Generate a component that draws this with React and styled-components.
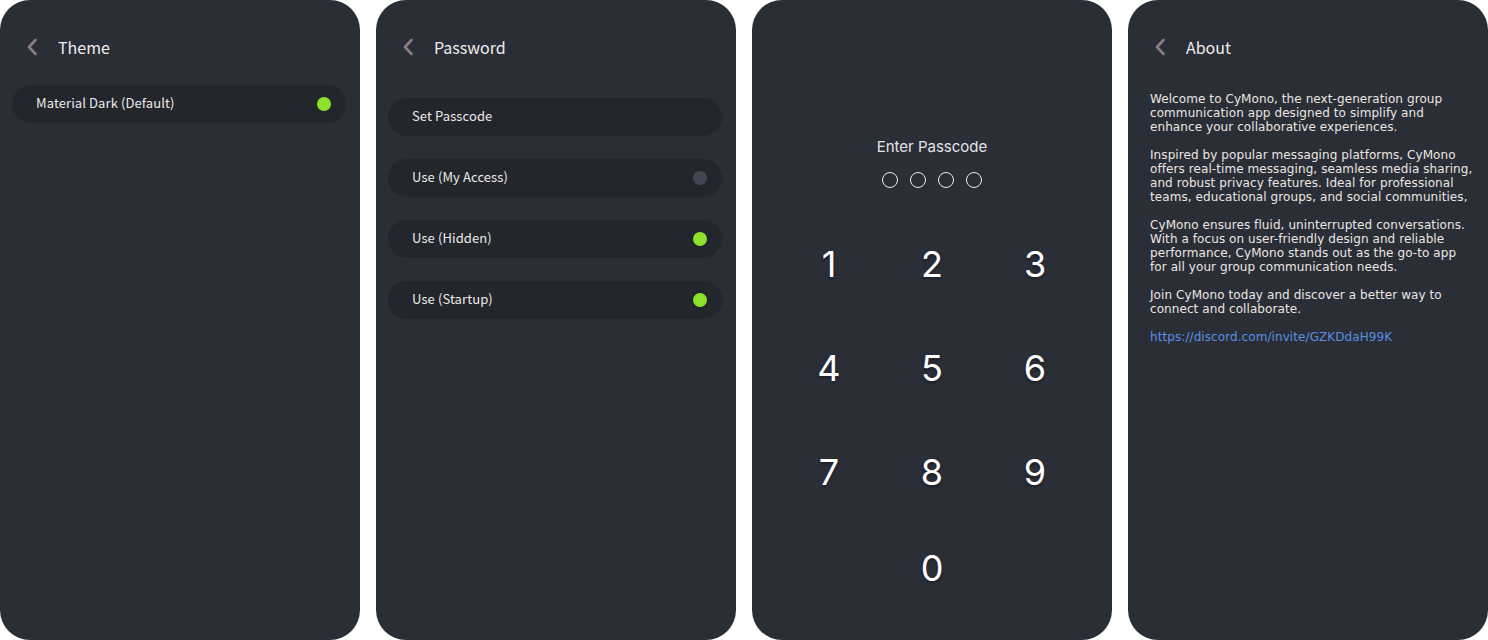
import React from "react";
import styled, { createGlobalStyle } from "styled-components";

const GlobalStyle = createGlobalStyle`
  html, body { margin: 0; padding: 0; background: #fff; }
  body { font-family: "Noto Sans CJK KR", "Noto Sans", sans-serif; }
`;

const Screens = styled.div`
  display: flex;
  gap: 16px;
  width: 1488px;
  height: 640px;
`;

const Panel = styled.div`
  width: 360px;
  height: 640px;
  flex: none;
  background: #2a2e37;
  border-radius: 30px;
  box-sizing: border-box;
  overflow: hidden;
  display: flex;
  flex-direction: column;
`;

const Header = styled.div`
  height: 96px;
  display: flex;
  align-items: flex-start;
  padding: 37px 0 0 26px;
  box-sizing: border-box;
`;

const BackBtn = styled.button`
  width: 14px;
  height: 20px;
  padding: 0;
  border: 0;
  background: transparent;
  display: flex;
  align-items: center;
  cursor: pointer;
  margin-right: 18px;
`;

const Title = styled.div`
  font-size: 16px;
  color: #f1ecea;
  line-height: 20px;
`;

const List = styled.div`
  display: flex;
  flex-direction: column;
  gap: ${(p) => p.$gap}px;
  margin-top: ${(p) => p.$top}px;
  padding: 0 14px 0 12px;
`;

const Row = styled.div`
  height: 38px;
  border-radius: 19px;
  background: #23262d;
  display: flex;
  align-items: center;
  justify-content: space-between;
  padding: 0 15px 3px 24px;
  box-sizing: border-box;
  font-size: 13px;
  letter-spacing: 0.1px;
  color: #eeeae8;
`;

const Dot = styled.span`
  width: 14px;
  height: 14px;
  border-radius: 50%;
  margin-top: 3px;
  background: ${(p) => (p.$on ? "#8ee22c" : "#434753")};
`;

const PassWrap = styled.div`
  display: flex;
  flex-direction: column;
  align-items: center;
  padding-top: 137px;
  font-family: Inter, "Noto Sans", sans-serif;
`;

const PassTitle = styled.div`
  font-size: 15px;
  color: #e4e4e6;
  line-height: 20px;
`;

const Circles = styled.div`
  display: flex;
  gap: 12px;
  margin-top: 15px;
`;

const Circle = styled.span`
  width: 16px;
  height: 16px;
  border: 1.2px solid #eceef0;
  border-radius: 50%;
  box-sizing: border-box;
`;

const Keypad = styled.div`
  display: grid;
  grid-template-columns: repeat(3, 103px);
  grid-auto-rows: 104px;
  margin-top: 54px;
  width: 309px;
`;

const Key = styled.button`
  border: 0;
  background: transparent;
  color: #fff;
  font-family: Inter, "Noto Sans", sans-serif;
  font-size: 36px;
  font-weight: 400;
  line-height: 44px;
  height: 44px;
  padding: 0;
  cursor: pointer;
  text-shadow: 0 2px 3px rgba(0, 0, 0, 0.35);
  grid-column: ${(p) => p.$col || "auto"};
  ${(p) => p.$last && "margin-top: -8px;"}
`;

const About = styled.div`
  margin-top: -4px;
  padding: 0 10px 0 22px;
  font-family: "DejaVu Sans", sans-serif;
  font-size: 12px;
  letter-spacing: 0.08px;
  line-height: 14px;
  color: #ece6e2;
  white-space: nowrap;
`;

const Para = styled.p`
  margin: 0 0 14px;
`;

const Link = styled.a`
  color: #5a8fe0;
  text-decoration: none;
  display: block;
  margin: 0;
`;

const paragraphs = [
  [
    "Welcome to CyMono, the next-generation group",
    "communication app designed to simplify and",
    "enhance your collaborative experiences.",
  ],
  [
    "Inspired by popular messaging platforms, CyMono",
    "offers real-time messaging, seamless media sharing,",
    "and robust privacy features. Ideal for professional",
    "teams, educational groups, and social communities,",
  ],
  [
    "CyMono ensures fluid, uninterrupted conversations.",
    "With a focus on user-friendly design and reliable",
    "performance, CyMono stands out as the go-to app",
    "for all your group communication needs.",
  ],
  ["Join CyMono today and discover a better way to", "connect and collaborate."],
];

function Chevron() {
  return (
    <svg width="12" height="18" viewBox="0 0 12 18">
      <polyline points="9.5,2 3,9 9.5,16" fill="none" stroke="#8d7f7f" strokeWidth="2.6" strokeLinecap="round" strokeLinejoin="round" />
    </svg>
  );
}

function PageHeader({ title }) {
  return (
    <Header>
      <BackBtn aria-label="back">
        <Chevron />
      </BackBtn>
      <Title>{title}</Title>
    </Header>
  );
}

export default function App() {
  return (
    <Screens>
      <GlobalStyle />

      <Panel>
        <PageHeader title="Theme" />
        <List $top={-11} $gap={0}>
          <Row>
            <span>Material Dark (Default)</span>
            <Dot $on />
          </Row>
        </List>
      </Panel>

      <Panel>
        <PageHeader title="Password" />
        <List $top={2} $gap={23}>
          <Row>
            <span>Set Passcode</span>
          </Row>
          <Row>
            <span>Use (My Access)</span>
            <Dot />
          </Row>
          <Row>
            <span>Use (Hidden)</span>
            <Dot $on />
          </Row>
          <Row>
            <span>Use (Startup)</span>
            <Dot $on />
          </Row>
        </List>
      </Panel>

      <Panel>
        <PassWrap>
          <PassTitle>Enter Passcode</PassTitle>
          <Circles>
            <Circle />
            <Circle />
            <Circle />
            <Circle />
          </Circles>
          <Keypad>
            {["1", "2", "3", "4", "5", "6", "7", "8", "9"].map((n) => (
              <Key key={n}>{n}</Key>
            ))}
            <Key $col={2} $last>0</Key>
          </Keypad>
        </PassWrap>
      </Panel>

      <Panel>
        <PageHeader title="About" />
        <About>
          {paragraphs.map((lines, i) => (
            <Para key={i}>
              {lines.map((line, j) => (
                <React.Fragment key={j}>
                  {line}
                  {j < lines.length - 1 && <br />}
                </React.Fragment>
              ))}
            </Para>
          ))}
          <Link href="#">https://discord.com/invite/GZKDdaH99K</Link>
        </About>
      </Panel>
    </Screens>
  );
}
